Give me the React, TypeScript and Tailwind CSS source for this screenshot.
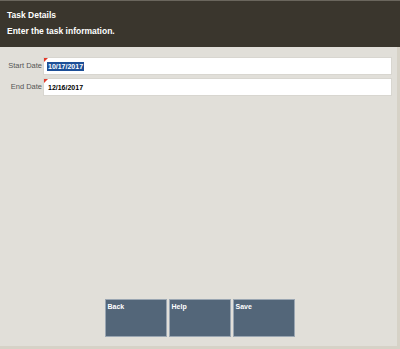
export default function App() {
  return (
    <div className="w-[400px] h-[349px] flex flex-col bg-[#e1dfd9] overflow-hidden" style={{ fontFamily: '"Liberation Sans", Arial, sans-serif' }}>
      <div className="h-[47px] bg-[#3a362d] border-t border-[#6a665d] flex flex-col pl-[7px] pt-[9px] gap-[6px] text-white font-bold text-[8.5px] leading-[10px]">
        <div>Task Details</div>
        <div>Enter the task information.</div>
      </div>
      <div className="flex-1 flex flex-col border-r-[3px] border-b-[3px] border-[#d6d2c7]">
        <div className="flex flex-col gap-[3px] pt-[10px] pr-[5px]">
          <div className="flex items-center">
            <div className="w-[43px] text-right pr-[1px] text-[7.5px] text-[#555] leading-[18px]">Start Date</div>
            <div className="relative flex-1 h-[18px] bg-white border border-[#d8d6d0] flex items-center pl-[3px]">
              <div className="absolute left-0 top-0 w-0 h-0 border-t-[4px] border-r-[4px] border-t-[#e23a2a] border-r-transparent" />
              <span className="bg-[#1d4f97] text-white font-bold text-[7px] leading-[9px] px-[1px]">10/17/2017</span>
            </div>
          </div>
          <div className="flex items-center">
            <div className="w-[43px] text-right pr-[1px] text-[7.5px] text-[#555] leading-[18px]">End Date</div>
            <div className="relative flex-1 h-[18px] bg-white border border-[#d8d6d0] flex items-center pl-[4px]">
              <div className="absolute left-0 top-0 w-0 h-0 border-t-[4px] border-r-[4px] border-t-[#e23a2a] border-r-transparent" />
              <span className="text-black font-bold text-[7px] leading-[9px]">12/16/2017</span>
            </div>
          </div>
        </div>
        <div className="flex-1" />
        <div className="flex justify-center gap-[2px] pb-[9px] pl-[2px]">
          {["Back", "Help", "Save"].map((t) => (
            <div key={t} className="w-[62px] h-[38px] bg-[#536679] border border-[#9aa6b2] text-white font-bold text-[7px] leading-[9px] px-[2px] pt-[2px]">
              {t}
            </div>
          ))}
        </div>
      </div>
    </div>
  );
}
